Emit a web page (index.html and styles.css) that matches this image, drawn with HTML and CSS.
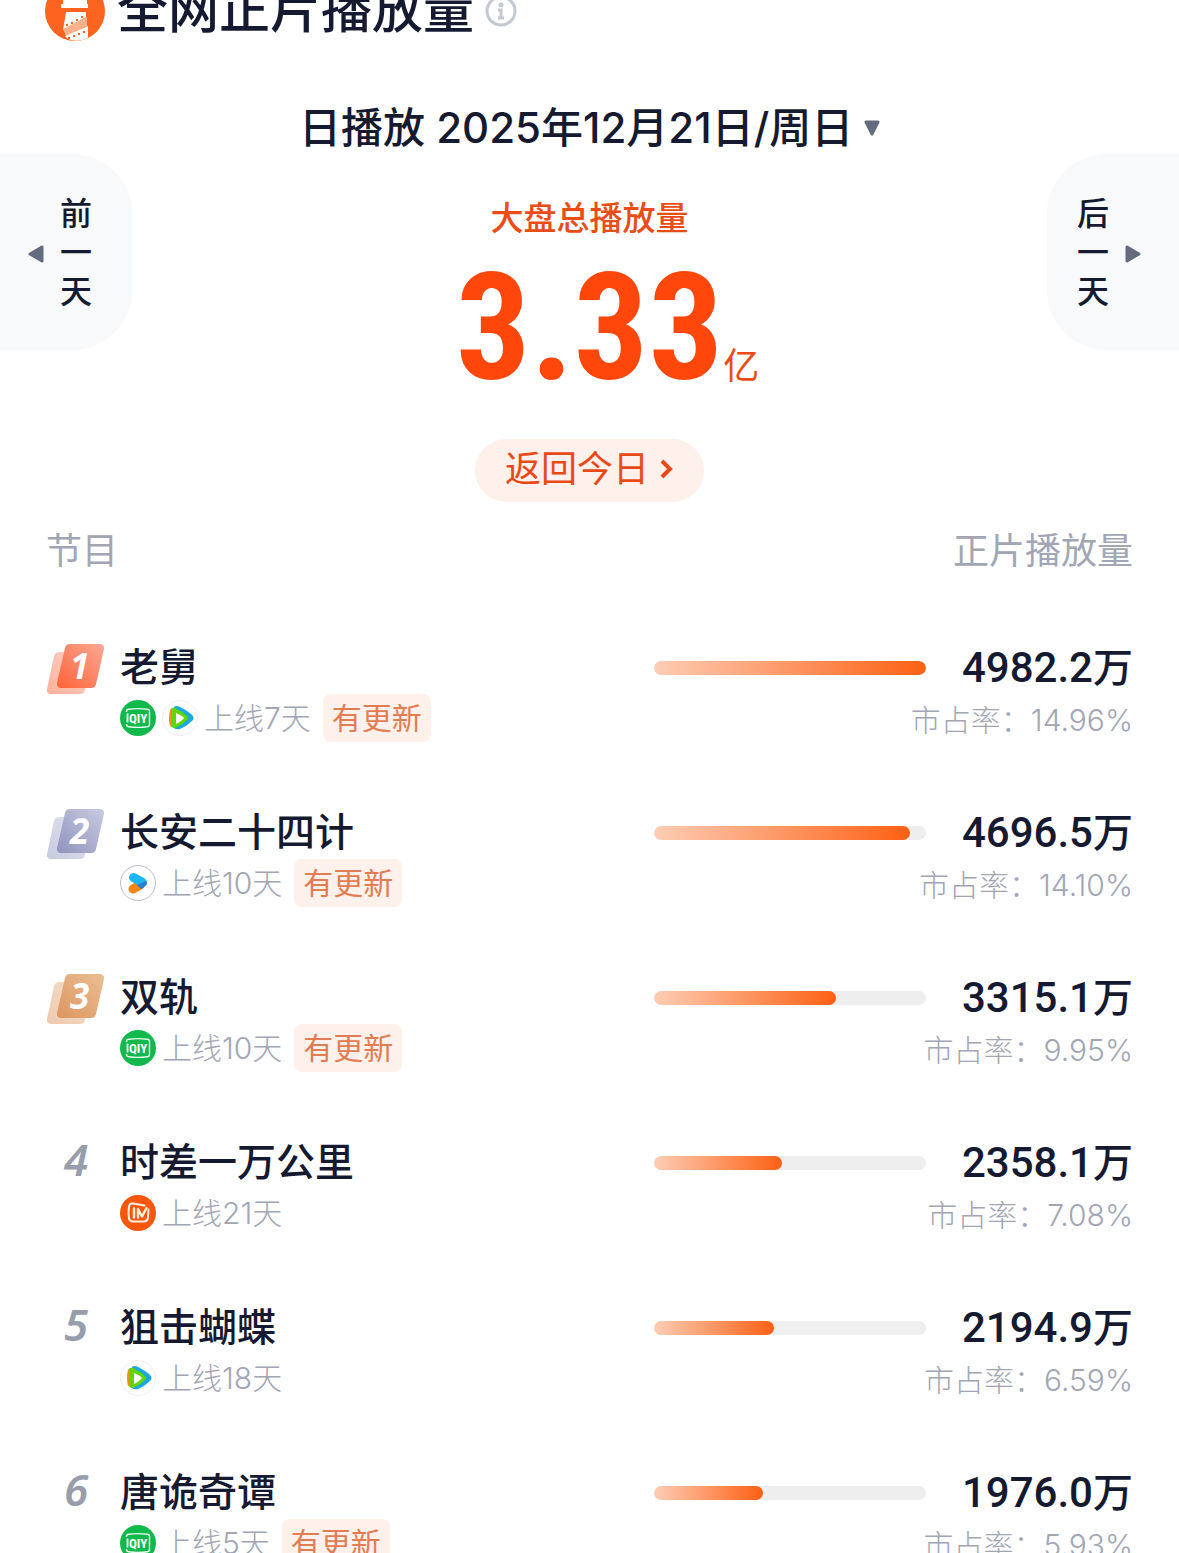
FILE: index.html
```html
<!DOCTYPE html>
<html lang="zh-CN">
<head>
    <meta charset="UTF-8">
    <meta name="viewport" content="width=device-width, initial-scale=1.0">
    <title>全网正片播放量</title>
    <link rel="stylesheet" href="styles.css">
</head>
<body>
    <!-- Shared icons -->
    <svg class="sprite" aria-hidden="true">
        <defs>
            <linearGradient id="gold" x1="1" y1="0" x2="0" y2="1">
                <stop offset="0" stop-color="#fba994"/>
                <stop offset="1" stop-color="#ff6238"/>
            </linearGradient>
            <linearGradient id="silver" x1="1" y1="0" x2="0" y2="1">
                <stop offset="0" stop-color="#c9cbe0"/>
                <stop offset="1" stop-color="#9093bd"/>
            </linearGradient>
            <linearGradient id="bronze" x1="1" y1="0" x2="0" y2="1">
                <stop offset="0" stop-color="#eabf94"/>
                <stop offset="1" stop-color="#dd9560"/>
            </linearGradient>
        </defs>
        <symbol id="plate" viewBox="0 0 60 52">
            <path opacity=".5" d="M14 9h26a4 4 0 0 1 4 5l-5 33a5 5 0 0 1-5 4H4a4 4 0 0 1-3-5l7-33a6 6 0 0 1 6-4z"/>
            <path d="M24 1h30a4 4 0 0 1 4 5l-8 35a5 5 0 0 1-5 4H15a4 4 0 0 1-4-5l8-35a5 5 0 0 1 5-4z"/>
        </symbol>
        <symbol id="iqiyi" viewBox="0 0 36 36">
            <circle cx="18" cy="18" r="18" fill="#11b84c"/>
            <path d="M6.500 12v-.5q0-2 2-2.200Q18 8 27.500 9.300q2 .2 2 2.200v13q0 2-2 2.200Q18 28 8.500 26.700q-2-.2-2-2.200V24" fill="none" stroke="#e9fbef" stroke-width="1.400"/>
            <path d="M7.500 13.500v9" stroke="#fff" stroke-width="1.800"/>
            <text x="9" y="23" font-size="13">QIY</text>
        </symbol>
        <symbol id="tencent" viewBox="0 0 36 36">
            <circle cx="18" cy="18" r="17.500" fill="#fff" stroke="#f0f0f2"/>
            <path d="M10 8q-3 1-3 10t3 9l4-2V9z" fill="#f98b1c"/>
            <path d="M12 7q2-2 6 0 8 4 12 8 3 3 0 6-5 5-12 8-4 1-6-1z" fill="#1ba7e0"/>
            <path d="M10 8q2-1 5 1 7 4 10 7 2 2 0 4-5 5-10 7-4 2-5 0-2-9 0-19z" fill="#5fd60c"/>
            <path d="M14 13q7 3 8 5-2 3-8 6z" fill="#fff"/>
        </symbol>
        <symbol id="youku" viewBox="0 0 36 36">
            <circle cx="18" cy="18" r="17.500" fill="#fff" stroke="#b9bdc7"/>
            <path d="M13 24l7-4" stroke="#f5860f" stroke-width="9" stroke-linecap="round"/>
            <path d="M13.500 12.500l9 5" stroke="#1cb5f5" stroke-width="9" stroke-linecap="round"/>
            <path d="M17 20l9-4q2 2 0 4-2 3-5 4z" fill="#2b7fd0"/>
        </symbol>
        <symbol id="mango" viewBox="0 0 36 36">
            <circle cx="18" cy="18" r="18" fill="#f8560b"/>
            <g fill="none" stroke="#ffeedd" stroke-linecap="round" stroke-linejoin="round">
                <path d="M24.500 10.500L13 8.500q-3.500-.5-4 3-1 6.500 0 12 .6 3 4 3h11q3.500-.3 4-4l.5-8" stroke-width="2"/>
                <path d="M14 22.500v-9" stroke-width="2.400"/>
                <path d="M18 22.500v-8.500l4 7.500 4.500-8.500" stroke-width="2.400"/>
            </g>
        </symbol>
        <symbol id="triangle" viewBox="0 0 16 18">
            <path d="M2 9l12-7v14z" fill="#646b7e" stroke="#646b7e" stroke-width="3" stroke-linejoin="round"/>
        </symbol>
    </svg>

    <!-- Title -->
    <header class="title-bar">
        <svg class="logo" viewBox="0 0 60 60" aria-hidden="true">
            <circle cx="30" cy="30" r="30" fill="#fd6420"/>
            <path d="M18 19v-4h4v4h5v-6h6v6h5v-4h4v8h1v4H16v-4h2z" fill="#fff"/>
            <path d="M21 31h20v5L18 49z" fill="#fff"/>
            <path d="M18 48l24-12v9L21 55z" fill="#ffb08d"/>
            <path d="M20 55l23-10v12q-11 5-20 1z" fill="#fff"/>
            <g fill="#fd6420">
                <path d="M21 43h2v2h-2zM26 41h2v2h-2zM31 38h2v2h-2zM36 35h2v2h-2zM23 56h2v2h-2zM28 54h2v2h-2zM33 52h2v2h-2zM38 50h2v2h-2z"/>
            </g>
        </svg>
        <h1 class="title">全网正片播放量</h1>
        <button class="info-button" type="button" aria-label="说明">
            <svg viewBox="0 0 32 32" width="32" height="32">
                <circle cx="16" cy="16" r="14" fill="none" stroke="#c3c8d1" stroke-width="3"/>
                <circle cx="16" cy="10" r="2.500" fill="#c3c8d1"/>
                <path d="M13 15h3v8M13 23h6" fill="none" stroke="#c3c8d1" stroke-width="3"/>
            </svg>
        </button>
    </header>

    <!-- Date -->
    <label class="date-picker">
        <select class="date-select" aria-label="选择日期">
            <option>日播放 2025年12月21日/周日</option>
        </select>
        <svg class="date-arrow" viewBox="0 0 16 16" aria-hidden="true">
            <path d="M2 2h12L8 14z" fill="#646b7e" stroke="#646b7e" stroke-width="3" stroke-linejoin="round"/>
        </svg>
    </label>

    <!-- Day total -->
    <section class="summary">
        <button class="day-button" type="button">
            <svg class="day-arrow"><use href="#triangle"/></svg>
            <span class="day-text">前一天</span>
        </button>
        <div class="total">
            <h2 class="total-label">大盘总播放量</h2>
            <p class="total-value">
                <span class="total-number">3.33</span>
                <span class="total-unit">亿</span>
            </p>
            <button class="today-button" type="button">
                返回今日
                <svg viewBox="0 0 14 22" width="14" height="22" aria-hidden="true">
                    <path d="M3 3l8 8-8 8" fill="none" stroke="#e84a17" stroke-width="4"/>
                </svg>
            </button>
        </div>
        <button class="day-button next" type="button">
            <span class="day-text">后一天</span>
            <svg class="day-arrow"><use href="#triangle"/></svg>
        </button>
    </section>

    <!-- Ranking -->
    <table class="ranking">
        <thead>
            <tr>
                <th scope="col">节目</th>
                <th scope="col">正片播放量</th>
            </tr>
        </thead>
        <tbody>
            <tr>
                <td>
                    <div class="show">
                        <svg class="medal gold" viewBox="0 0 60 52"><use href="#plate"/><text x="24" y="36">1</text></svg>
                        <div class="show-info">
                            <div class="show-name">老舅</div>
                            <div class="show-meta">
                                <svg class="platform"><use href="#iqiyi"/></svg>
                                <svg class="platform"><use href="#tencent"/></svg>
                                <span>上线7天</span>
                                <span class="tag">有更新</span>
                            </div>
                        </div>
                    </div>
                </td>
                <td>
                    <div class="plays">
                        <div class="bar"><div class="bar-fill" style="width: 100%"></div></div>
                        <span class="play-count">4982.2<span class="play-unit">万</span></span>
                    </div>
                    <div class="share">市占率：14.96%</div>
                </td>
            </tr>
            <tr>
                <td>
                    <div class="show">
                        <svg class="medal silver" viewBox="0 0 60 52"><use href="#plate"/><text x="24" y="36">2</text></svg>
                        <div class="show-info">
                            <div class="show-name">长安二十四计</div>
                            <div class="show-meta">
                                <svg class="platform"><use href="#youku"/></svg>
                                <span>上线10天</span>
                                <span class="tag">有更新</span>
                            </div>
                        </div>
                    </div>
                </td>
                <td>
                    <div class="plays">
                        <div class="bar"><div class="bar-fill" style="width: 94%"></div></div>
                        <span class="play-count">4696.5<span class="play-unit">万</span></span>
                    </div>
                    <div class="share">市占率：14.10%</div>
                </td>
            </tr>
            <tr>
                <td>
                    <div class="show">
                        <svg class="medal bronze" viewBox="0 0 60 52"><use href="#plate"/><text x="24" y="36">3</text></svg>
                        <div class="show-info">
                            <div class="show-name">双轨</div>
                            <div class="show-meta">
                                <svg class="platform"><use href="#iqiyi"/></svg>
                                <span>上线10天</span>
                                <span class="tag">有更新</span>
                            </div>
                        </div>
                    </div>
                </td>
                <td>
                    <div class="plays">
                        <div class="bar"><div class="bar-fill" style="width: 67%"></div></div>
                        <span class="play-count">3315.1<span class="play-unit">万</span></span>
                    </div>
                    <div class="share">市占率：9.95%</div>
                </td>
            </tr>
            <tr>
                <td>
                    <div class="show">
                        <span class="rank">4</span>
                        <div class="show-info">
                            <div class="show-name">时差一万公里</div>
                            <div class="show-meta">
                                <svg class="platform"><use href="#mango"/></svg>
                                <span>上线21天</span>
                            </div>
                        </div>
                    </div>
                </td>
                <td>
                    <div class="plays">
                        <div class="bar"><div class="bar-fill" style="width: 47%"></div></div>
                        <span class="play-count">2358.1<span class="play-unit">万</span></span>
                    </div>
                    <div class="share">市占率：7.08%</div>
                </td>
            </tr>
            <tr>
                <td>
                    <div class="show">
                        <span class="rank">5</span>
                        <div class="show-info">
                            <div class="show-name">狙击蝴蝶</div>
                            <div class="show-meta">
                                <svg class="platform"><use href="#tencent"/></svg>
                                <span>上线18天</span>
                            </div>
                        </div>
                    </div>
                </td>
                <td>
                    <div class="plays">
                        <div class="bar"><div class="bar-fill" style="width: 44%"></div></div>
                        <span class="play-count">2194.9<span class="play-unit">万</span></span>
                    </div>
                    <div class="share">市占率：6.59%</div>
                </td>
            </tr>
            <tr>
                <td>
                    <div class="show">
                        <span class="rank">6</span>
                        <div class="show-info">
                            <div class="show-name">唐诡奇谭</div>
                            <div class="show-meta">
                                <svg class="platform"><use href="#iqiyi"/></svg>
                                <span>上线5天</span>
                                <span class="tag">有更新</span>
                            </div>
                        </div>
                    </div>
                </td>
                <td>
                    <div class="plays">
                        <div class="bar"><div class="bar-fill" style="width: 40%"></div></div>
                        <span class="play-count">1976.0<span class="play-unit">万</span></span>
                    </div>
                    <div class="share">市占率：5.93%</div>
                </td>
            </tr>
        </tbody>
    </table>
</body>
</html>
```
FILE: styles.css
```css
* {
    box-sizing: border-box;
}

body {
    margin: 0;
    height: 100vh;
    overflow: hidden;
    background: #fff;
    color: #151a31;
    font-family: Inter, "Noto Sans CJK SC", sans-serif;
    font-weight: 400;
}

h1, h2, p {
    margin: 0;
}

button, select {
    padding: 0;
    border: none;
    background: none;
    color: inherit;
    font: inherit;
    cursor: pointer;
}

.sprite {
    position: absolute;
    width: 0;
    height: 0;
}

#iqiyi text {
    fill: #fff;
    font-family: "Roboto Condensed", "Liberation Sans Narrow", sans-serif;
    font-weight: 700;
}

/* Title, partly scrolled out of view */
.title-bar {
    display: flex;
    align-items: center;
    height: 60px;
    margin-top: -19px;
    padding: 0 45px;
}

.logo {
    width: 60px;
    height: 60px;
    margin-right: 12px;
}

.title {
    padding-bottom: 2px;
    font-size: 51px;
    font-weight: 500;
    line-height: 60px;
}

.info-button {
    display: flex;
    margin-left: 11px;
}

/* Date */
.date-picker {
    display: flex;
    justify-content: center;
    align-items: center;
    gap: 10px;
    height: 60px;
    margin-top: 57px;
}

.date-select {
    appearance: none;
    font-size: 42px;
    font-weight: 500;
    line-height: 60px;
}

.date-arrow {
    width: 16px;
    height: 16px;
}

/* Day total */
.summary {
    display: flex;
    justify-content: space-between;
    align-items: flex-start;
    margin-top: -4px;
}

.day-button {
    display: flex;
    align-items: center;
    justify-content: flex-end;
    gap: 16px;
    width: 132px;
    height: 196px;
    padding: 0 40px 0 0;
    border-radius: 0 60px 60px 0;
    background: #f8f9fb;
}

.day-button.next {
    justify-content: flex-start;
    padding: 0 0 0 30px;
    border-radius: 60px 0 0 60px;
}

.day-arrow {
    width: 16px;
    height: 18px;
    margin-top: 4px;
}

.next .day-arrow {
    transform: rotate(180deg);
}

.day-text {
    width: 32px;
    font-size: 32px;
    font-weight: 500;
    line-height: 39px;
    word-break: break-all;
}

.total {
    display: flex;
    flex-direction: column;
    align-items: center;
    padding-top: 40px;
}

.total-label {
    color: #ea4c15;
    font-size: 33px;
    font-weight: 500;
    line-height: 48px;
}

.total-value {
    display: grid;
    grid-template-columns: 1fr auto 1fr;
    align-items: baseline;
    height: 165px;
    padding-top: 4px;
    line-height: 165px;
    color: #ff470b;
}

.total-number {
    grid-column: 2;
    font-family: "Liberation Sans Narrow", "Roboto Condensed", Roboto, sans-serif;
    font-size: 148px;
    font-weight: 700;
}

.total-unit {
    color: #ea4c15;
    font-size: 36px;
    line-height: 48px;
}

.today-button {
    display: flex;
    align-items: center;
    gap: 10px;
    height: 63px;
    margin-top: 32px;
    padding: 0 31px 4px 30px;
    border-radius: 32px;
    background: #fef0ea;
    color: #e84a17;
    font-size: 36px;
    line-height: 54px;
}

/* Ranking */
.ranking {
    width: 100%;
    border-collapse: collapse;
    margin-top: 22px;
}

th, td {
    width: 50%;
    padding: 0;
    text-align: left;
    vertical-align: top;
}

th:first-child, td:first-child {
    padding-left: 46px;
}

th:last-child, td:last-child {
    padding-right: 46px;
    text-align: right;
}

th {
    height: 86px;
    color: #a2a6b4;
    font-size: 36px;
    font-weight: 400;
    line-height: 54px;
}

td {
    height: 165px;
    padding-top: 30px;
}

.show {
    display: flex;
}

.medal {
    width: 60px;
    height: 52px;
    margin: 3px 14px 0 0;
}

.medal text {
    fill: #fff;
    font: italic 700 35px "Noto Sans", sans-serif;
}

.gold {
    fill: url(#gold);
}

.silver {
    fill: url(#silver);
}

.bronze {
    fill: url(#bronze);
}

.rank {
    width: 60px;
    margin-right: 14px;
    color: #989dac;
    font: italic 600 44px/48px "Noto Sans", sans-serif;
    text-align: center;
}

.show-name {
    font-size: 39px;
    font-weight: 500;
    line-height: 54px;
}

.show-meta {
    display: flex;
    align-items: center;
    gap: 6px;
    height: 48px;
    color: #a2a6b4;
    font-size: 30px;
    font-weight: 300;
    line-height: 48px;
}

.platform {
    width: 36px;
    height: 36px;
}

.tag {
    margin-left: 6px;
    padding: 0 9px;
    border-radius: 8px;
    background: #fef1eb;
    color: #e27c52;
    font-weight: 400;
}

.plays {
    display: flex;
    justify-content: flex-end;
    align-items: center;
    gap: 36px;
    height: 56px;
}

.bar {
    width: 50%;
    height: 14px;
    border-radius: 7px;
    background: #eee;
    overflow: hidden;
}

.bar-fill {
    height: 100%;
    border-radius: 7px;
    background: linear-gradient(90deg, #fdcdb5, #fd6013);
}

.play-count {
    font-family: Roboto, "Noto Sans CJK SC", sans-serif;
    font-size: 42px;
    font-weight: 500;
    line-height: 48px;
}

.play-unit {
    font-size: 40px;
}

.share {
    color: #a2a6b4;
    font-size: 30px;
    font-weight: 300;
    line-height: 48px;
}
```
